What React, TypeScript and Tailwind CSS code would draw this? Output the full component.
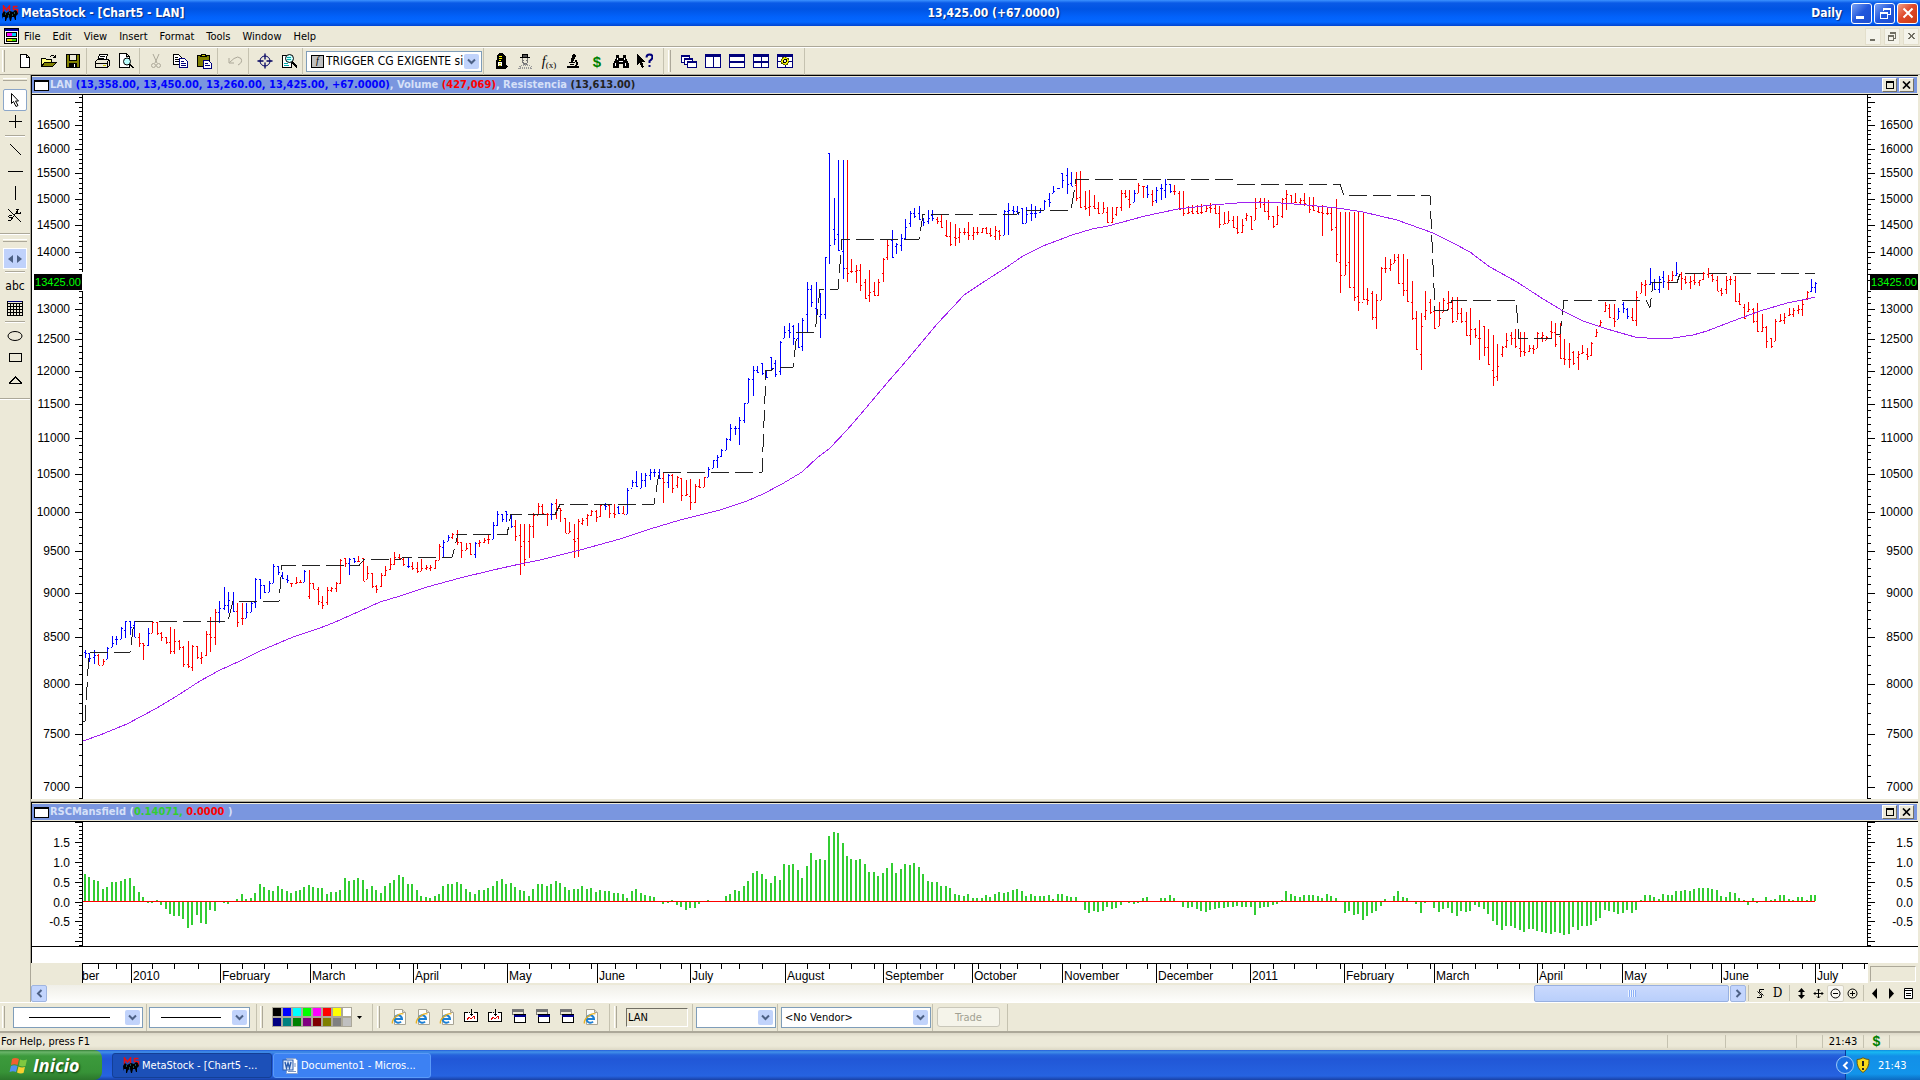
import React from 'react';
import { clsx } from 'clsx';

// One row per session: colour, high, low, open, close (vertical chart units)
const SESSIONS = `
b650,658,652,653 b653,662,653,658 b650,664,657,655 r654,665,655,665 r659,665,665,661 b647,659,659,648 b636,647,647,643 b636,645,639,639
b627,639,639,628 b621,638,630,621 b621,635,621,627 b621,637,625,637 r633,647,637,643 r643,660,643,645 b628,646,645,633 r622,633,633,622
r622,635,622,633 r632,641,633,637 r637,644,637,642 r627,654,642,651 r629,654,651,641 r640,650,641,647 r646,667,647,664 r641,668,664,666
r645,671,667,646 r646,659,646,657 r652,664,658,657 r631,656,655,634 r617,652,634,637 r609,645,637,612 b601,623,612,608 b587,610,608,605
b592,613,605,600 b592,612,601,611 r603,627,611,622 r603,625,618,618 b603,618,618,612 b601,612,612,603 b578,608,602,579 b579,599,579,585
b585,593,585,592 b581,592,592,583 b564,583,583,566 b566,575,566,572 b572,579,575,578 b575,583,579,580 r583,587,583,583 r577,584,583,582
r580,583,582,582 b570,582,582,571 r570,599,596,583 r583,589,583,589 r587,605,589,601 r596,609,602,605 r587,605,602,590 r587,592,590,588
r582,592,588,583 r559,584,583,560 r558,567,558,563 b558,575,563,559 b558,563,558,561 r556,562,561,561 r558,581,558,581 r566,579,579,573
r573,588,573,586 r585,593,586,589 r573,587,586,575 r566,576,575,570 r558,570,569,564 r552,565,564,557 r554,560,557,558 r557,566,559,564
b558,568,566,566 r562,570,566,568 r562,573,568,571 r559,571,571,568 r565,570,568,567 r565,571,568,567 r560,569,568,560 r544,560,560,546
b540,558,547,542 b535,541,541,537 r533,539,537,534 r530,545,534,542 r542,558,542,550 r543,550,550,548 r543,555,543,554 b542,558,554,543
r540,547,543,542 r538,543,542,540 r535,544,539,539 b522,539,539,525 b511,526,525,514 b514,522,514,519 b511,522,511,514 b514,528,515,526
r520,541,526,536 r524,575,535,546 r524,566,541,559 r524,558,541,526 r513,538,526,515 r503,515,515,506 r504,515,506,513 r513,526,514,514
b503,520,514,504 r499,519,503,508 r508,522,508,510 r518,533,518,533 r522,533,533,531 r524,558,539,541 r519,557,538,521 r518,525,523,520
r514,526,518,515 r510,516,515,511 r510,522,511,517 r504,517,516,505 b503,510,505,506 r504,518,505,513 r504,518,513,514 b506,514,507,513
r506,514,513,514 b488,514,514,490 b480,487,488,482 b471,487,482,486 b473,488,488,480 b473,487,480,475 b469,480,475,472 b469,477,472,472
b469,479,472,478 r473,503,478,482 b474,488,482,475 r474,493,475,488 r476,488,485,477 r478,501,478,495 r480,496,495,494 r479,510,496,502
r484,503,502,486 r479,488,486,487 r477,487,487,477 b467,477,477,469 b460,468,468,460 b455,468,460,457 b449,457,456,450 b438,450,450,439
b424,441,439,428 b426,435,428,428 b417,445,428,420 b403,423,420,403 b378,403,403,379 b366,396,379,370 b366,373,370,372 b363,375,363,373
b370,378,374,377 b357,370,357,368 b360,377,363,374 b341,375,371,342 b326,338,338,332 b323,338,330,332 b325,345,326,338 b323,348,338,347
b318,351,346,320 b282,332,314,289 b285,307,289,302 b282,318,308,314 b293,338,316,314 b257,319,314,257 b153,264,153,245 b198,245,229,239
b160,251,234,250 b160,279,251,268 r160,282,268,273 r259,273,271,271 r265,283,271,270 r264,291,270,285 r279,299,282,298 r270,302,295,292
r282,296,291,295 r279,296,295,282 r258,282,273,259 r240,260,257,245 b230,258,240,257 b243,254,246,244 b234,251,245,238 b219,240,238,227
b211,227,223,213 b208,218,213,216 b206,220,213,219 b218,226,219,222 b210,224,221,218 b210,221,215,218 r217,224,219,221 r215,228,221,227
r220,237,235,236 r222,246,236,244 r224,246,237,238 r228,243,237,232 r228,235,232,232 r222,240,232,235 r227,240,235,232 r227,235,232,232
r228,233,232,228 r227,234,228,233 r228,237,233,235 r226,240,236,230 r230,240,231,235 b210,235,235,211 b203,235,211,210 b206,215,210,211
b206,214,211,214 b208,224,208,223 b207,223,223,214 b204,221,213,213 b206,218,213,213 b208,213,212,210 b200,210,210,201 b193,207,199,202
b186,193,193,191 b188,189,188,188 b173,188,173,180 b168,194,175,184 b172,186,183,186 r172,201,185,198 r171,208,197,207 r191,210,206,208
r190,216,207,206 r195,209,206,208 r202,214,208,213 r202,213,213,208 r207,223,212,222 r207,223,222,218 r207,216,214,207 r190,211,207,193
r190,198,193,196 r190,208,199,204 b190,202,202,193 r183,193,193,185 r186,198,186,186 b185,198,187,194 r190,206,194,201 b187,203,200,190
b184,200,188,188 b179,198,190,184 b184,193,184,191 r185,195,191,191 r191,210,193,209 r191,216,208,213 r206,214,213,212 r205,214,211,213
r205,214,211,213 r204,214,212,212 r205,212,211,208 r203,213,207,208 r204,214,208,213 r206,228,213,224 r212,224,224,223 r211,223,223,220
r216,228,220,227 r216,234,228,232 r219,233,232,225 r213,221,218,215 r216,230,216,229 r198,220,220,208 r198,208,201,202 r198,212,204,211
r200,220,211,216 r216,228,216,226 r206,225,224,215 r198,218,216,199 r190,210,198,194 r195,204,195,203 r193,203,202,202 r198,205,202,200
r193,206,200,203 r197,213,205,209 r197,211,206,210 r206,213,211,212 r205,236,212,213 r208,215,213,213 r208,231,213,229 r199,262,227,254
r212,293,262,275 r212,275,275,265 r212,288,262,287 r212,301,287,297 r212,311,296,302 r212,300,302,299 r288,305,299,300 r291,320,293,317
r294,329,317,300 r267,300,300,268 r257,273,268,268 r259,271,268,264 r254,263,263,260 r254,284,257,283 r254,296,283,290 r259,302,290,301
r281,320,302,318 r311,350,318,349 r313,370,354,326 r291,320,316,310 r299,314,302,312 r310,329,311,328 r302,326,326,318 r298,312,312,300
r291,310,303,302 r297,323,308,321 r297,320,321,313 r308,323,313,321 r312,336,321,335 r308,345,335,329 r328,338,329,335 r320,360,338,338
r326,356,326,347 r329,365,347,364 r335,386,370,377 r344,381,376,366 r346,357,354,347 r333,348,346,340 r332,345,335,338 r329,348,338,346
r332,357,348,351 r332,356,351,352 r345,352,351,348 r345,354,348,349 r332,348,348,333 r332,342,337,335 r336,340,340,337 r321,338,331,332
r323,347,332,344 r323,359,336,358 r339,365,358,359 r343,368,359,359 r351,365,352,363 r351,370,357,354 r345,354,353,352 r348,360,354,356
r342,356,355,343 r329,337,336,332 r320,326,325,322 r302,312,311,305 r304,318,308,317 r304,327,318,321 b308,319,319,311 b302,313,304,308
b308,319,309,316 r308,321,317,320 r291,326,320,297 r282,293,293,284 r280,296,285,284 b268,285,284,282 b279,290,282,289 b276,293,289,279
b271,288,277,281 r275,290,282,280 r271,281,280,275 b262,276,275,273 r272,290,274,278 r276,284,279,282 r276,289,282,281 r274,285,280,282
r280,286,282,280 r272,280,279,273 r268,278,274,273 r273,282,275,279 r276,291,280,291 r288,296,290,293 r276,294,289,280 r276,285,279,279
r276,302,280,301 r293,305,301,304 r304,319,307,318 r302,312,311,309 r308,323,309,321 r303,332,321,331 r314,332,331,327 r326,348,327,341
r338,348,338,346 r319,341,341,321 r314,322,321,320 r313,324,320,317 r308,316,315,314 r308,317,314,310 r305,314,310,309 r299,316,309,304
r291,300,298,292 b279,292,291,287 b282,293,287,283
`.trim().split(/\s+/);

const MANSFIELD = [
  27, 24, 21, 20, 12, 14, 19, 19, 20, 22, 23, 15, 9, 4, -2, -2, 1, -4, -8, -13, -15, -15, -18, -27, -24, -14, -22, -23, -9, -10,
  -1, -2, -3, 0, 2, 7, 2, 3, 8, 17, 14, 11, 10, 15, 12, 10, 8, 10, 11, 14, 16, 14, 13, 13, 7, 9, 9, 11, 23, 20,
  21, 23, 21, 12, 15, 11, 8, 15, 18, 21, 26, 24, 17, 17, 11, 5, 4, 3, 5, 7, 15, 17, 17, 19, 17, 12, 9, 7, 11, 11,
  13, 15, 20, 22, 17, 18, 14, 11, 10, 5, 12, 17, 17, 15, 17, 20, 18, 14, 11, 12, 12, 15, 12, 13, 9, 11, 10, 10, 8, 8,
  7, 3, 10, 12, 8, 6, 5, 4, -1, -3, -2, 1, -4, -6, -9, -7, -7, -3, -1, 1, 0, -1, 0, 5, 7, 11, 10, 15, 20, 28,
  30, 27, 22, 18, 25, 21, 37, 36, 37, 31, 23, 35, 48, 41, 42, 41, 65, 69, 68, 58, 45, 42, 41, 42, 37, 29, 29, 25, 28, 33,
  38, 28, 32, 37, 36, 38, 34, 27, 20, 19, 19, 15, 15, 13, 7, 6, 5, 7, 3, 3, 3, 6, 4, 7, 9, 8, 9, 11, 12, 10,
  5, 7, 5, 5, 5, 6, 2, 7, 7, 5, 4, 4, -1, -9, -12, -10, -11, -10, -6, -8, -7, -4, 0, -2, -3, -2, 3, 4, 0, -1,
  3, 3, 6, 3, 0, -6, -7, -6, -8, -10, -11, -9, -8, -7, -7, -6, -6, -5, -6, -6, -6, -14, -7, -6, -6, -4, -3, 1, 10, 7,
  5, 4, 6, 6, 6, 5, 3, 7, 5, 3, -1, -12, -10, -14, -13, -19, -15, -12, -10, -5, 2, 0, 5, 10, 4, 3, 0, -3, -12, -2,
  -1, -7, -11, -8, -7, -12, -15, -10, -11, -10, -4, -6, -8, -13, -20, -24, -29, -25, -25, -27, -29, -31, -28, -28, -30, -31, -32, -33, -31, -32,
  -34, -33, -26, -29, -25, -25, -24, -20, -17, -9, -10, -11, -13, -12, -9, -12, -9, 1, 6, 6, 4, 2, 7, 6, 6, 10, 10, 11, 10, 12,
  13, 13, 13, 12, 11, 5, 4, 9, 8, 3, 1, -4, 3, -2, -1, 4, 1, 2, 6, 6, 2, 1, 4, 4, 1, 6, 6,
];

const AVERAGE = '83,741 100,735 127,724 157,708 180,694 200,681 220,670 240,661 260,651 293,637 320,628 333,623 360,611 380,602 400,596 427,587 460,578 493,570 520,564 540,560 560,555 580,550 620,539 650,529 680,520 720,510 747,501 763,494 782,484 802,472 817,458 830,448 847,430 860,415 887,383 907,360 937,324 953,307 964,295 982,283 1007,267 1023,256 1043,246 1072,235 1092,229 1108,226 1145,216 1178,209 1212,205 1250,202 1268,202 1307,205 1337,208 1363,212 1397,220 1433,233 1453,243 1470,252 1490,267 1517,282 1540,297 1563,311 1583,321 1607,329 1635,337 1647,338 1673,338 1693,335 1707,331 1733,321 1760,311 1787,303 1807,299 1815,297';

const RESISTANCE = 'M83 721.5H85L89 652.5H130L134 621.5H228L233 601.5H279L282 565.5H359L364 559.5H400L403 557.5H452L458 534.5H507L511 514.5H555L560 504.5H654L659 472.5H762L766 370.5H771L775 367.5H793L797 332.5H815L820 289.5H838L842 239.5H919L923 214.5H1016L1023 210.5H1071L1076 179.5H1233L1237 184.5H1340L1344 195.5H1430L1435 310.5H1447L1452 300.5H1516L1519 338.5H1552L1556 334.5H1560L1564 300.5H1646L1650 307.5L1653 282.5H1677L1680 273.5H1815';

const MONTHS: [number, string][] = [
  [131, '2010'], [220, 'February'], [310, 'March'], [413, 'April'], [507, 'May'], [597, 'June'], [690, 'July'], [785, 'August'],
  [883, 'September'], [972, 'October'], [1062, 'November'], [1156, 'December'], [1250, '2011'], [1344, 'February'], [1434, 'March'],
  [1537, 'April'], [1622, 'May'], [1721, 'June'], [1815, 'July'],
];
const WEEKS = [
  98, 116, 152, 174, 198, 242, 264, 287, 331, 355, 376, 399, 417, 440, 461, 484, 529, 551, 569, 591, 615, 636, 660, 681, 700, 721, 739,
  762, 807, 829, 851, 874, 896, 920, 936, 954, 978, 1000, 1017, 1040, 1080, 1102, 1126, 1147, 1170, 1187, 1210, 1233, 1274, 1295, 1317,
  1340, 1362, 1385, 1407, 1430, 1452, 1475, 1497, 1519, 1542, 1564, 1586, 1600, 1645, 1667, 1690, 1712, 1734, 1757, 1779, 1802, 1819, 1842, 1864,
];

const barX = (i: number) => Math.floor(85.3 + i * 4.4836);
const priceY = (p: number) => Math.round(787 - Math.log(p / 7000) * 772);
const rscY = (v: number) => Math.round(901.5 - v * 39.6);

const barsPath = (color: string) =>
  SESSIONS.map((s, i) => {
    if (s[0] !== color) return '';
    const [hi, lo, o, c] = s.slice(1).split(',').map(Number);
    const x = barX(i);
    return `M${x + 0.5} ${hi}V${lo}M${x - 1} ${o + 0.5}h1M${x + 1} ${c + 0.5}h1`;
  }).join('');

const rscPath = MANSFIELD.map((v, i) => (v ? `M${barX(i)} 901V${901 - v}` : '')).join('');

const PRICE_TICKS = Array.from({ length: 103 }, (_, i) => 6900 + i * 100);
const RSC_TICKS = Array.from({ length: 32 }, (_, i) => (20 - i) / 10);

interface AxisProps {
  side: 'left' | 'right';
}

const PriceAxis: React.FC<AxisProps> = ({ side }) => {
  const left = side === 'left';
  const d = PRICE_TICKS.filter((p) => p < 13400 || p > 13500 || (!left && p !== 13400)).map((p) => {
    const len = p % 500 === 0 && p !== 13500 ? 7 : 3;
    return left ? `M${50 - len} ${priceY(p) + 0.5}h${len}` : `M1 ${priceY(p) + 0.5}h${len}`;
  }).join('');
  return (
    <svg className="block w-[51px] h-[704px] shrink-0" viewBox="0 95 51 704" fontFamily="'Liberation Sans', Arial, sans-serif" fontSize="12">
      <path d={left ? 'M50.5 95V272M50.5 291V799' : 'M.5 95V799'} stroke="#000" shapeRendering="crispEdges" />
      <path d={d} stroke="#000" shapeRendering="crispEdges" />
      {PRICE_TICKS.filter((p) => p % 500 === 0 && p !== 13500 && p < 17000).map((p) => (
        <text key={p} x={left ? 38 : 46} y={priceY(p) + 4} textAnchor="end">{p}</text>
      ))}
      <rect x={left ? 2 : 3} y="274" width="48" height="16" fill="#000" />
      <text x={left ? 49 : 50} y="286" textAnchor="end" fill="#0f0" fontSize="11">13425.00</text>
    </svg>
  );
};

const RscAxis: React.FC<AxisProps> = ({ side }) => {
  const left = side === 'left';
  const d = RSC_TICKS.map((v) => {
    const len = Math.round(v * 10) % 5 === 0 ? 7 : 3;
    return left ? `M${50 - len} ${rscY(v) + 0.5}h${len}` : `M1 ${rscY(v) + 0.5}h${len}`;
  }).join('');
  return (
    <svg className="block w-[51px] h-[124px] shrink-0" viewBox="0 822 51 124" fontFamily="'Liberation Sans', Arial, sans-serif" fontSize="12">
      <path d={left ? 'M50.5 822V946' : 'M.5 822V946'} stroke="#000" shapeRendering="crispEdges" />
      <path d={d} stroke="#000" shapeRendering="crispEdges" />
      {[1.5, 1, 0.5, 0, -0.5].map((v) => (
        <text key={v} x={left ? 38 : 46} y={rscY(v) + 5} textAnchor="end">{v.toFixed(1)}</text>
      ))}
    </svg>
  );
};

const Chevron = () => (
  <span className="pointer-events-none absolute right-[2px] top-[2px] bottom-[2px] w-[15px] rounded-[2px] bg-[#c1d3fb] flex items-center justify-center">
    <svg width="9" height="7" viewBox="0 0 9 7" fill="none" stroke="#4d6185" strokeWidth="2"><path d="M1 1.5 4.5 5 8 1.5" /></svg>
  </span>
);

interface ComboProps {
  label: string;
  value: string;
  className: string;
  children?: React.ReactNode;
}

const Combo: React.FC<ComboProps> = ({ label, value, className, children }) => (
  <div className={clsx('relative h-[21px] shrink-0 bg-white border border-[#7f9db9]', className)}>
    <select aria-label={label} className="appearance-none block w-full h-full pl-[3px] pr-[18px] bg-transparent outline-none">
      <option>{value}</option>
    </select>
    {children}
    <Chevron />
  </div>
);

const Sep = () => <span className="w-px h-[27px] mx-px shrink-0 bg-[#c5c2b0]" />;
const Grip = () => <span className="w-[3px] h-[22px] shrink-0 border-r border-[#aca899] border-l border-l-white" />;

interface IconButtonProps {
  label: string;
  className?: string;
  children: React.ReactNode;
}

const IconButton: React.FC<IconButtonProps> = ({ label, className, children }) => (
  <button aria-label={label} className={clsx('w-6 h-6 shrink-0 flex items-center justify-center', className)}>
    <svg width="16" height="16" viewBox="0 0 16 16" fill="none" stroke="#000" shapeRendering="crispEdges">{children}</svg>
  </button>
);

const CaptionButtons = () => (
  <div className="ml-auto flex gap-[2px] pr-[3px]">
    <button aria-label="Maximize pane" className="w-[15px] h-[14px] bg-[#ece9d8] border border-t-white border-l-white border-r-[#716f64] border-b-[#716f64] flex items-center justify-center">
      <span className="w-[8px] h-[8px] border border-t-2 border-black" />
    </button>
    <button aria-label="Close pane" className="w-[15px] h-[14px] bg-[#ece9d8] border border-t-white border-l-white border-r-[#716f64] border-b-[#716f64] flex items-center justify-center">
      <svg width="9" height="8" viewBox="0 0 9 8" stroke="#000" strokeWidth="1.7"><path d="M1 .5 8 7.5M8 .5 1 7.5" /></svg>
    </button>
  </div>
);

const PaneHeader: React.FC<{ children: React.ReactNode }> = ({ children }) => (
  <div className="h-5 border-y border-black bg-[#ece9d8] pt-px pb-[2px] pr-px">
    <div className="h-4 bg-[#7a96df] flex items-center pl-[2px] font-bold text-[11px] leading-4 text-[#d6e0f8] whitespace-pre">
      <span className="w-[15px] h-[11px] mr-px bg-white border border-t-2 border-black shrink-0" />
      <p>{children}</p>
      <CaptionButtons />
    </div>
  </div>
);

const Bull = () => (
  <svg width="17" height="17" viewBox="0 0 17 17" className="shrink-0">
    <path d="M1.5 8V1l3 4 3-4v6M15.5 1.500h-4v3h4v4" fill="none" stroke="#e81010" strokeWidth="1.5" />
    <path d="M0 9l2-3 2 2 4-2 3 1 2-2 2 1 1 3-2 2v4h-1l-1-3-2 0-1 4H8l-1-4-2 1-1 3H3v-4l-2 0-.5 2z" fill="#000" />
    <path d="M3 9h1M7 8h1M10 10h1M12 8h1M6 11h1" stroke="#3aa" />
  </svg>
);

const TitleBar = () => (
  <header className="h-[26px] flex items-center pl-[2px] pr-[2px] text-white font-bold text-[12px] bg-[linear-gradient(to_bottom,#3c92ff_0px,#0a5ae6_3px,#0054e3_9px,#0262fb_17px,#0468ff_22px,#0144d0_26px)] [text-shadow:1px_1px_1px_#0a2a80]">
    <div className="basis-[48.3%] flex items-center gap-[2px]">
      <Bull />
      <h1>MetaStock - [Chart5 - LAN]</h1>
    </div>
    <span>13,425.00 (+67.0000)</span>
    <span className="ml-auto mr-[9px]">Daily</span>
    <div className="flex gap-[2px]">
      <button aria-label="Minimize" className="w-[21px] h-[21px] rounded-[3px] border border-white bg-[linear-gradient(135deg,#7ba2f4,#2257dc_50%,#1e4fd0)] flex items-end justify-start p-[4px]"><span className="w-[8px] h-[3px] bg-white" /></button>
      <button aria-label="Restore" className="w-[21px] h-[21px] rounded-[3px] border border-white bg-[linear-gradient(135deg,#7ba2f4,#2257dc_50%,#1e4fd0)] flex items-center justify-center">
        <svg width="12" height="12" viewBox="0 0 12 12" fill="none" stroke="#fff" shapeRendering="crispEdges"><path d="M4 1.5h7.5M4 2.5h7.5M4.5 1v3M11 1v6.5H8M1 5.5h7.5M1 6.5h7.5M1.5 5v6.5h6.5V5" /></svg>
      </button>
      <button aria-label="Close" className="w-[21px] h-[21px] rounded-[3px] border border-white bg-[linear-gradient(135deg,#f0a088,#e0492a_45%,#c93a12)] flex items-center justify-center">
        <svg width="12" height="12" viewBox="0 0 12 12" stroke="#fff" strokeWidth="2"><path d="M1.5 1.5 10.5 10.5M10.5 1.5 1.5 10.5" /></svg>
      </button>
    </div>
  </header>
);

const MenuBar = () => (
  <nav className="h-[21px] flex items-center pl-1 border-b border-[#aca899]">
    <svg width="15" height="16" viewBox="0 0 15 16" shapeRendering="crispEdges" className="mr-px">
      <rect width="15" height="16" fill="#000" /><rect x="1" y="1" width="13" height="2" fill="#0000a0" /><rect x="1" y="3" width="13" height="12" fill="#fff" />
      <rect x="2" y="4" width="11" height="5" fill="#000" /><rect x="2" y="10" width="11" height="4" fill="#000" />
      <rect x="3" y="5" width="5" height="3" fill="#f0f" /><rect x="8" y="5" width="4" height="3" fill="#0cf" />
      <rect x="3" y="11" width="5" height="2" fill="#dd0" /><rect x="8" y="11" width="4" height="2" fill="#3d0" />
    </svg>
    {['File', 'Edit', 'View', 'Insert', 'Format', 'Tools', 'Window', 'Help'].map((m) => (
      <button key={m} className="px-[6px] first-of-type:pl-1">{m}</button>
    ))}
    <div className="ml-auto flex gap-[3px] pr-px">
      {['M2 8.500h5M2 9.500h5', 'M3 1.500h6M3 2.500h6M8.500 2v5H7M1 4.500h6M1 5.500h6M1.500 5v4.500h5V5', 'M2 2l6 6M8 2 2 8M3 2l6 6M9 2 3 8'].map((d, i) => (
        <button key={d} aria-label={['Minimize chart', 'Restore chart', 'Close chart'][i]} className="w-4 h-[17px] bg-[#f4f3ea] border border-[#e3dfcc] flex items-center justify-center">
          <svg width="11" height="11" viewBox="0 0 11 11" fill="none" stroke="#716f64" shapeRendering="crispEdges"><path d={d} /></svg>
        </button>
      ))}
    </div>
  </nav>
);

const Toolbar = () => (
  <div className="h-[28px] flex items-center pl-[2px] border-t border-white border-b border-b-[#aca899]">
    <Grip />
    <IconButton label="New" className="ml-2"><path fill="#fff" d="M3.5 1.5h6l3 3v10h-9zM9.5 1.5v3h3" /></IconButton>
    <IconButton label="Open"><path fill="#ffff80" d="M.5 13.5v-8h4l1 1h5v3" /><path fill="#808000" d="M.5 13.5l3-4h12l-4 4z" /><path d="M9 3.5h1M10 2.5h3M13 3.5h1M14.5 2v3M12 4.5h2" /></IconButton>
    <IconButton label="Save"><path fill="#808000" d="M1.5 1.5h13v13h-13z" /><path fill="#ece9d8" d="M4.5 1.5h7v6h-7z" /><path fill="#000" d="M4.5 10.5h7v4h-7z" /><path stroke="#fff" d="M9.5 11v3" /></IconButton>
    <Sep />
    <IconButton label="Print" className="ml-[2px]"><path fill="#fff" d="M5.5 1.5h8l-2 6h-8z" /><path fill="#ece9d8" d="M1.5 8.5l2-2h10l2 1v5l-2 2h-12z" /><path d="M1 10.5h13M6 3.5h5M5 5.5h5M13.5 8v6" /><path stroke="#cc0" d="M9 12.5h3" /></IconButton>
    <IconButton label="Print preview"><path fill="#fff" d="M1.5.5h7l3 3v11h-10zM8.5.5v3h3" /><circle cx="9" cy="8.5" r="3.500" fill="#bff" shapeRendering="auto" /><path strokeWidth="2" d="M11.5 11l4 4" /></IconButton>
    <Sep />
    <IconButton label="Cut" className="ml-[3px]"><g stroke="#aca899" shapeRendering="auto"><path d="M5 1l4 9M11 1 7 10" /><circle cx="5.5" cy="12.5" r="2" /><circle cx="10.5" cy="12.5" r="2" /></g></IconButton>
    <IconButton label="Copy"><path fill="#fff" d="M1.5 1.5h5l3 3v7h-8zM3 4.5h3M3 6.5h4M3 8.5h4" /><path fill="#fff" stroke="#00007b" d="M7.5 5.5h5l3 3v6h-8zM9 8.5h3M9 10.5h5M9 12.5h5" /></IconButton>
    <IconButton label="Paste"><path fill="#808000" d="M1.5 2.5h12v11h-12z" /><path fill="#d8d400" d="M4.5 3.5h6l-1-2h-4z" /><path fill="#fff" stroke="#00007b" d="M7.5 7.5h5l3 3v5h-8zM9 10.5h3M9 12.5h5" /></IconButton>
    <Sep />
    <IconButton label="Undo" className="ml-[4px]"><path stroke="#aca899" shapeRendering="auto" d="M2 5v5h5M2.5 9.5 7 5.5q4-3 7 0 2 4-3 6.5" /></IconButton>
    <Sep />
    <IconButton label="Center" className="ml-[3px]"><g stroke="#000060" shapeRendering="auto"><circle cx="8" cy="8" r="5" /><path d="M8 .5v6M8 9.5v6M.5 8h6M9.5 8h6" strokeWidth="1.300" /></g></IconButton>
    <IconButton label="Zoom"><path fill="#fff" d="M1.5 14.5v-12h9v12z" /><path stroke="#0aa" d="M3 10.5h4M3 12.5h5" /><circle cx="8.5" cy="5.5" r="4" fill="#cff" shapeRendering="auto" /><path stroke="#0aa" d="M6 4.5h4M6 6.5h4" /><path strokeWidth="2" d="M11 8.5l5 6" /></IconButton>
    <Sep />
    <Combo label="Indicator" value="TRIGGER CG EXIGENTE si" className="w-[176px] ml-[2px] text-[12px] [&>select]:pl-[19px] [&>select]:pr-0">
      <span className="pointer-events-none absolute left-1 top-[3px] w-[13px] h-[13px] bg-[#c0c0c0] border border-black text-center text-[10px] leading-[10px] italic font-['Liberation_Serif',serif]">f</span>
    </Combo>
    <Sep />
    <IconButton label="Expert advisor" className="ml-1"><path fill="#000" d="M4.5 2.5l2-2h3l3 3v8l2 2-2 2h-9v-4z" /><path stroke="#ff0" d="M6 3.5h3M6 5.5h3M6 7.5h2" /><path fill="#fff" d="M4.5 8.5h5v5h-5z" /><path stroke="#cc0" d="M6 10.5h2M6 12.5h2" /></IconButton>
    <IconButton label="System tester"><path fill="#555" d="M5.5 1.5h5v3h-5zM3 4.5h10" /><path stroke="#777" d="M5.5 5v4l2 2h2l1-2V5M6 7.5h1M9 7.5h1M7 10.5h2" /><path stroke="#999" strokeDasharray="1 1" d="M3 13.5l3-2h4l4 2v2H2zM4 12.5h9M3 14.5h11" /></IconButton>
    <button aria-label="Indicator builder" className="w-6 h-6 shrink-0 italic text-[14px] font-['Liberation_Serif',serif]">f<sub className="text-[9px] not-italic">(x)</sub></button>
    <IconButton label="Explorer"><path fill="#000" stroke="none" d="M8 1h2l1 2-3 6H6V7zM4 9h6v1H4zM2 13h12v2H2zM11 6q3 3 1 7h-2q2-3 0-5zM5 11h4v1H5z" /></IconButton>
    <button aria-label="Downloader" className="w-6 h-6 shrink-0 font-bold text-[15px] text-[#008000] font-['Liberation_Sans',sans-serif]">$</button>
    <IconButton label="Find"><path fill="#000" stroke="none" d="M3 2h3v3h4V2h3v3l3 6v4h-6v-4H6v4H0v-4l3-6z" /><path stroke="#fff" d="M2.5 10v3M12.5 10v3M4.5 5v2M11.5 5v2M6 8.5h4" /></IconButton>
    <IconButton label="Context help"><path fill="#000" stroke="none" d="M0 1v11l2.5-2.500L5 15l2-1-2-5h3z" /><path stroke="#00007b" strokeWidth="2" shapeRendering="auto" d="M9.5 4.5q0-3 3-3t3 2.500q0 2-3 4v2M12.5 12v2" /></IconButton>
    <span className="w-[5px]" />
    <Sep />
    <span className="w-[3px]" />
    <Grip />
    <IconButton label="Cascade" className="ml-[6px]"><g stroke="#00007b" fill="#fff"><path d="M.5 2.5h8v7h-8zM.5 3.5h8" /><path d="M3.5 5.5h8v6h-8zM3.5 6.5h8" /><path d="M6.5 8.5h9v6h-9zM6.5 9.5h9" /></g></IconButton>
    <IconButton label="Tile columns"><path fill="#fff" stroke="#00007b" d="M.5 1.5h15v13h-15zM.5 2.5h15M.5 3.5h15M8.5 1v14" /></IconButton>
    <IconButton label="Tile rows"><path fill="#fff" stroke="#00007b" d="M.5 1.5h15v13h-15zM.5 2.5h15M.5 3.5h15M.5 8.5h15M.5 9.5h15" /></IconButton>
    <IconButton label="Tile all"><path fill="#fff" stroke="#00007b" d="M.5 1.5h15v13h-15zM.5 2.5h15M.5 3.5h15M.5 8.5h15M.5 9.5h15M8.5 1v14" /></IconButton>
    <IconButton label="Layout options"><path fill="#fff" stroke="#00007b" d="M.5 1.5h15v13h-15zM.5 2.5h15M.5 3.5h15M.5 8.5h15M8.5 1v14" /><circle cx="8" cy="8" r="4" fill="#ee0" stroke="#550" strokeDasharray="2 1" /><circle cx="8" cy="8" r="1.500" fill="#ece9d8" /></IconButton>
    <span className="w-[6px]" />
    <Sep />
  </div>
);

const SideGrip = () => <div className="mx-[3px] h-[3px] border-t border-white border-b border-b-[#aca899]" />;
const SideRule = () => <div className="mx-[5px] h-[2px] my-[2px] border-t border-[#aca899] border-b border-b-white" />;

const SideBar = () => (
  <aside className="w-[31px] shrink-0 flex flex-col pt-[3px] border-r border-[#aca899]">
    <SideGrip />
    <button aria-label="Pointer" className="mx-[3px] mt-2 h-[22px] bg-white border border-[#8ba6c9] rounded-[2px] flex items-center justify-center">
      <svg width="12" height="16" viewBox="0 0 12 16" fill="#fff" stroke="#000"><path d="M2.5 1.5v10l2-2 2.5 5 2-1-2.500-4.500h3z" /></svg>
    </button>
    <IconButton label="Crosshair" className="mx-[3px] h-[22px]"><path d="M2 7.500h13M8.5 1v13" /></IconButton>
    <SideRule />
    <IconButton label="Trendline" className="mx-[3px] h-[22px]"><path d="M3 2l11 11" /></IconButton>
    <IconButton label="Horizontal line" className="mx-[3px] h-[22px]"><path d="M1 7.500h15" /></IconButton>
    <IconButton label="Vertical line" className="mx-[3px] h-[22px]"><path d="M8.5 0v14" /></IconButton>
    <IconButton label="Speed line" className="mx-[3px] h-[22px]"><path d="M1 1l13 13M11 2 4 12M10.5 1v5M9 1.5h3M9 5.500h5M13.5 4v2M2 7.500h3M1.5 8v1M2 9.500h3M4.5 10v2M1 12.500h3" /></IconButton>
    <div className="mt-[6px] mb-1 h-[2px] border-t border-[#aca899] border-b border-b-white" />
    <SideGrip />
    <button aria-label="Scroll" className="mx-[3px] mt-[6px] h-[21px] bg-[#c0d2fb] border border-white flex items-center justify-center">
      <svg width="14" height="8" viewBox="0 0 14 8" fill="#4d6185"><path d="M5 0v8L0 4zM9 0v8l5-4z" /></svg>
    </button>
    <SideRule />
    <button className="h-[22px] text-[12px]">abc</button>
    <IconButton label="Grid" className="mx-[3px] h-[22px]"><path stroke="#00007b" d="M1 1.5h14" /><path d="M.5 1v14.500h15V1M0 3.500h16M0 6.500h16M0 9.500h16M0 12.500h16M3.5 3v12M6.5 3v12M9.5 3v12M12.5 3v12" /></IconButton>
    <SideRule />
    <IconButton label="Ellipse" className="mx-[3px] h-[22px]"><ellipse cx="8" cy="8" rx="7" ry="4.500" shapeRendering="auto" /></IconButton>
    <IconButton label="Rectangle" className="mx-[3px] h-[22px]"><path d="M2.5 3.500h12v8h-12z" /></IconButton>
    <IconButton label="Triangle" className="mx-[3px] h-[22px]"><path d="M2 11.500h13M2.5 11l6-6 6 6" /></IconButton>
    <div className="mt-[7px] h-[2px] border-t border-[#aca899] border-b border-b-white" />
  </aside>
);

const pct = (x: number) => `${((x - 82) / 1786) * 100}%`;

const DateAxis = () => (
  <div className="flex h-[21px]">
    <div className="w-[51px] shrink-0" />
    <svg className="block grow h-[20px] bg-white border-t border-black" fontFamily="'Liberation Sans', Arial, sans-serif" fontSize="12">
      {WEEKS.map((x) => <line key={x} x1={pct(x)} x2={pct(x)} y1="0" y2="5" stroke="#000" shapeRendering="crispEdges" />)}
      <text x="0" y="16">ber</text>
      <line x1="0.5" x2="0.5" y1="0" y2="19" stroke="#000" />
      {MONTHS.map(([x, name]) => (
        <g key={x}>
          <line x1={pct(x)} x2={pct(x)} y1="0" y2="19" stroke="#000" shapeRendering="crispEdges" />
          <text x={pct(x + 2)} y="16">{name}</text>
        </g>
      ))}
    </svg>
    <div className="w-[50px] shrink-0 pt-[3px] px-[2px]">
      <div className="h-4 w-[46px] border border-t-[#aca899] border-l-[#aca899] border-r-white border-b-white" />
    </div>
  </div>
);

const MiniButton: React.FC<IconButtonProps> = ({ label, className, children }) => (
  <button aria-label={label} className={clsx('w-[17px] h-[17px] shrink-0 flex items-center justify-center', className)}>
    <svg width="11" height="11" viewBox="0 0 11 11" fill="none" stroke="#000">{children}</svg>
  </button>
);

const ScrollRow = () => (
  <div className="flex h-[18px] items-center">
    <div className="grow h-[17px] flex bg-[linear-gradient(to_bottom,#f0efe8,#fefefc)]">
      <button aria-label="Scroll left" className="w-4 rounded-[2px] bg-[#c3d5fd] border border-[#9fb5e0] flex items-center justify-center">
        <svg width="7" height="9" viewBox="0 0 7 9" fill="none" stroke="#4d6185" strokeWidth="2"><path d="M5.5 1 2 4.5 5.5 8" /></svg>
      </button>
      <span className="grow" />
      <span className="basis-[11.4%] rounded-[2px] bg-[linear-gradient(to_bottom,#cad9fd,#b9cffb)] border border-[#98b0e0] flex items-center justify-center gap-px">
        {[0, 1, 2, 3].map((i) => <i key={i} className="w-px h-[7px] bg-[#eef4fe] shadow-[1px_0_0_#8cb0f8]" />)}
      </span>
      <button aria-label="Scroll right" className="w-4 ml-px rounded-[2px] bg-[#c3d5fd] border border-[#9fb5e0] flex items-center justify-center">
        <svg width="7" height="9" viewBox="0 0 7 9" fill="none" stroke="#4d6185" strokeWidth="2"><path d="M1.5 1 5 4.5 1.5 8" /></svg>
      </button>
    </div>
    <div className="w-[172px] shrink-0 flex items-center pl-[2px]">
      <span className="w-px h-4 bg-[#c5c2b0] mr-[3px]" />
      <MiniButton label="Refresh"><path d="M9 1.500H4.500v3M2.500 3.500l2 2 2-2M2 9.500h4.500v-3M4.500 7.500l2-2 2 2" /></MiniButton>
      <button className="w-[17px] text-[12px] leading-4 font-['DejaVu_Serif',serif]">D</button>
      <span className="w-px h-4 bg-[#c5c2b0] mx-[3px]" />
      <MiniButton label="Expand vertical"><path fill="#000" stroke="none" d="M5.5 0 9 4H6.500v3H9L5.500 11 2 7h2.500V4H2z" /></MiniButton>
      <MiniButton label="Pan"><path d="M5.5 1v9M1 5.5h9M4 2.500l1.500-1.500L7 2.500M4 8.500 5.500 10 7 8.500M2.500 4 1 5.500 2.500 7M8.500 4 10 5.500 8.500 7" /></MiniButton>
      <MiniButton label="Zoom out" className="bg-[#f8f7f2] border border-[#d8d4c4] rounded-[2px]"><circle cx="5.5" cy="5.5" r="4.500" /><path d="M3 5.5h5" /></MiniButton>
      <MiniButton label="Zoom in"><circle cx="5.5" cy="5.5" r="4.500" /><path d="M3 5.5h5M5.5 3v5" /></MiniButton>
      <span className="w-px h-4 bg-[#c5c2b0] mx-[2px]" />
      <MiniButton label="Previous"><path fill="#000" stroke="none" d="M8 0v11L3 5.500z" /></MiniButton>
      <MiniButton label="Next"><path fill="#000" stroke="none" d="M3 0v11l5-5.500z" /></MiniButton>
      <MiniButton label="Properties"><path fill="#fff" d="M1.5.5h8v10h-8zM1.500 2.500h8M3 5.500h5M3 7.500h5" /></MiniButton>
    </div>
  </div>
);

const PALETTE = [
  'bg-black', 'bg-[#0000ff]', 'bg-[#00ffff]', 'bg-[#00ff00]', 'bg-[#ff00ff]', 'bg-[#ff0000]', 'bg-[#ffff00]', 'bg-white',
  'bg-[#000080]', 'bg-[#008080]', 'bg-[#008000]', 'bg-[#800080]', 'bg-[#800000]', 'bg-[#808000]', 'bg-[#808080]', 'bg-[#c0c0c0]',
];

const WebIcon = () => (
  <g shapeRendering="auto">
    <path fill="#fdfdfb" stroke="#a8a494" d="M3.5.5h8l3 3v12h-11z" />
    <path fill="#dcd8cc" stroke="#a8a494" d="M11.5.5v3h3" />
    <path d="M3.500 10h7.500a3.700 3.700 0 1 0-1 2.600" stroke="#1b7fd4" strokeWidth="2" />
    <path d="M1.500 14.500q-1-3 3.500-7T12.500 5" stroke="#e8b020" strokeWidth="1.300" />
  </g>
);
const TemplateIcon = () => (
  <g><path fill="#fff" d="M5 3.500H1.500v9h13v-9H11" /><path d="M8.5 0v7M7 5.500h3M6 3.500h1" /><path stroke="#e00000" d="M4 11l2-3 2 2 3-3 1 3" /></g>
);
const WindowIcon = () => (
  <g><path fill="#ece9d8" stroke="#777" d="M1.5.5h11v5h-11zM1.500 1.500h11M1.500 2.500h11" /><path fill="#fff" d="M3.5 5.500h11v8h-11z" /><path stroke="#000090" strokeWidth="2" d="M3 7h12" /></g>
);

const BottomBar = () => (
  <div className="h-[30px] flex items-center pl-[2px] border-t border-white border-b border-b-[#aca899]">
    <Grip />
    <Combo label="Line style" value="" className="w-[130px] ml-2"><span className="pointer-events-none absolute left-[15px] right-[32px] top-[9px] h-px bg-black" /></Combo>
    <span className="w-[2px]" /><Sep />
    <Combo label="Line weight" value="" className="w-[101px] ml-px"><span className="pointer-events-none absolute left-[11px] right-[28px] top-[9px] h-px bg-black" /></Combo>
    <span className="w-[5px]" /><Sep /><span className="w-[2px]" />
    <Grip />
    <div className="ml-[9px] grid grid-cols-8">
      {PALETTE.map((c) => <button key={c} aria-label={c} className={clsx('w-[10px] h-[10px] border border-[#aca899]', c)} />)}
    </div>
    <svg width="5" height="3" viewBox="0 0 5 3" className="ml-[5px] mr-[9px]"><path d="M0 0h5L2.500 3z" /></svg>
    <Sep /><span className="w-[3px]" /><Grip />
    <IconButton label="Web 1" className="ml-[7px]"><WebIcon /></IconButton>
    <IconButton label="Web 2"><WebIcon /></IconButton>
    <IconButton label="Web 3"><WebIcon /></IconButton>
    <IconButton label="Load template"><TemplateIcon /></IconButton>
    <IconButton label="Save template"><TemplateIcon /></IconButton>
    <IconButton label="Window 1"><WindowIcon /></IconButton>
    <IconButton label="Window 2"><WindowIcon /></IconButton>
    <IconButton label="Window 3"><WindowIcon /></IconButton>
    <IconButton label="Web 4"><WebIcon /></IconButton>
    <span className="w-[5px]" /><Sep /><span className="w-[3px]" /><Grip />
    <input aria-label="Symbol" defaultValue="LAN" className="ml-[9px] w-[62px] h-[19px] pl-px bg-[#ece9d8] border border-t-[#716f64] border-l-[#716f64] border-r-white border-b-white outline-none" />
    <span className="w-[3px]" /><Sep />
    <Combo label="Quantity" value="" className="w-[80px] ml-[2px]" />
    <Sep />
    <Combo label="Vendor" value="<No Vendor>" className="w-[150px] ml-[2px]" />
    <Sep />
    <button className="ml-[3px] w-[63px] h-[20px] rounded-[3px] border border-[#c9c7ba] bg-[#f5f4ea] text-[#a1a192]">Trade</button>
    <span className="w-[6px]" /><Sep />
  </div>
);

const StatusCell: React.FC<{ className: string; children?: React.ReactNode }> = ({ className, children }) => (
  <span className={clsx('h-[13px] shrink-0 border-l border-[#c5c2b0] flex items-center justify-center', className)}>{children}</span>
);

const StatusBar = () => (
  <div className="h-[18px] flex items-center pl-px border-t border-[#aca899] bg-[linear-gradient(to_bottom,#dcd8c8,#ece9d8_4px,#ece9d8_13px,#dcd8c6)]">
    <span className="grow">For Help, press F1</span>
    <StatusCell className="w-[58px]" />
    <StatusCell className="w-[71px]" />
    <StatusCell className="w-[26px]" />
    <StatusCell className="w-[41px]">21:43</StatusCell>
    <StatusCell className="w-[26px]"><b className="text-[14px] text-[#008000] font-['Liberation_Sans',sans-serif]">$</b></StatusCell>
    <StatusCell className="w-[31px]" />
  </div>
);

const TaskBar = () => (
  <footer className="h-[30px] flex text-white bg-[linear-gradient(to_bottom,#245edb_0px,#4190e8_2px,#2562dc_5px,#2157d7_9px,#2663e0_26px,#1941a5_30px)]">
    <button className="w-[102px] h-full flex items-center gap-1 pl-[9px] rounded-r-[8px] italic font-bold text-[18px] [text-shadow:1px_1px_2px_#0a3a0a] bg-[linear-gradient(to_bottom,#327e33_0px,#6ab56a_2px,#3c9a3c_6px,#379337_22px,#2b762b_30px)] font-['Open_Sans',sans-serif]">
      <svg width="20" height="19" viewBox="0 0 20 19">
        <path fill="#f06030" d="M3 3q3-2 7 0L8.500 9q-3-1.500-6.500 0z" /><path fill="#80c840" d="M11 3.500q3 1.500 7 0L16.500 10q-3 1.200-6.500-.5z" />
        <path fill="#5090f0" d="M2 10q3-1.500 6.500 0L7 16q-3-1.500-6.500 0z" /><path fill="#f8d030" d="M9.500 10.500q3 1.500 6.500.5L14.500 17q-3 1.200-6.500-.5z" />
      </svg>
      Inicio
    </button>
    <button className="ml-[10px] mt-[3px] w-[160px] h-[25px] rounded-[3px] bg-[#1c50b8] border border-[#143f96] flex items-center pl-[10px] gap-[2px]">
      <Bull /> MetaStock - [Chart5 -...
    </button>
    <button className="mt-[3px] w-[158px] h-[25px] ml-px rounded-[3px] bg-[#3c81f3] border border-[#5a9af8] flex items-center pl-[8px] gap-[3px]">
      <svg width="16" height="16" viewBox="0 0 16 16"><path fill="#fff" stroke="#8aa4d0" d="M4.5.5h9l2 2v13h-11z" /><rect x="1" y="2" width="10" height="10" fill="#dce8fa" stroke="#2a5cad" /><path d="M3 4l1.500 6L6 5l1.500 5L9 4" fill="none" stroke="#2a5cad" strokeWidth="1.400" /><path d="M12 6h2M12 8h2M6 13.500h8" stroke="#7a94c0" /></svg>
      Documento1 - Micros...
    </button>
    <div className="ml-auto w-[75px] flex items-center border-l border-[#0a3a9a] bg-[linear-gradient(to_bottom,#0d8ae0_0px,#18b9f2_2px,#1290e8_6px,#1294ea_24px,#0c6ac0_30px)]">
      <button aria-label="Show hidden icons" className="-ml-[10px] w-[18px] h-[18px] rounded-full bg-[#1a6fe0] border border-[#9ccaf8] flex items-center justify-center">
        <svg width="7" height="9" viewBox="0 0 7 9" fill="none" stroke="#fff" strokeWidth="2"><path d="M5.5 1 2 4.5 5.5 8" /></svg>
      </button>
      <svg width="14" height="16" viewBox="0 0 14 16" className="ml-[2px] mr-2"><path fill="#f8d818" stroke="#6a5a10" d="M7 .8q3 1.700 6 1.700.5 9-6 13Q.5 11.500 1 2.500q3 0 6-1.700z" /><path d="M7 4v5M7 11v2" stroke="#222" strokeWidth="2" /></svg>
      <span>21:43</span>
    </div>
  </footer>
);

const App: React.FC = () => (
  <div className="min-h-screen flex flex-col bg-[#ece9d8] text-black text-[11px] leading-[13px] font-['DejaVu_Sans_Condensed','DejaVu_Sans',sans-serif]">
    <TitleBar />
    <MenuBar />
    <Toolbar />
    <div className="flex">
      <SideBar />
      <main className="grow min-w-0 pr-[2px]">
        <section className="border-l border-black bg-white">
          <PaneHeader>
            LAN <span className="text-[#0000ff]">(13,358.00, 13,450.00, 13,260.00, 13,425.00, +67.0000)</span>, Volume <span className="text-[#ff0000]">(427,069)</span>, Resistencia <span className="text-[#222]">(13,613.00)</span>
          </PaneHeader>
          <div className="flex">
            <PriceAxis side="left" />
            <svg className="block grow min-w-0 h-[704px]" viewBox="83 95 1784 704" preserveAspectRatio="none" fill="none">
              <path d={barsPath('b')} stroke="#0000ff" shapeRendering="crispEdges" />
              <path d={barsPath('r')} stroke="#ff0000" shapeRendering="crispEdges" />
              <path d={RESISTANCE} stroke="#222" strokeDasharray="18 6" shapeRendering="crispEdges" />
              <polyline points={AVERAGE} stroke="#a020f0" shapeRendering="crispEdges" />
            </svg>
            <PriceAxis side="right" />
          </div>
        </section>
        <div className="h-[3px] bg-[#ece9d8] border-b border-[#aca899]" />
        <section className="border-l border-black bg-white">
          <PaneHeader>
            RSCMansfield (<span className="text-[#32cd32]">0.14071, </span><span className="text-[#ff0000]">0.0000 </span>)
          </PaneHeader>
          <div className="flex">
            <RscAxis side="left" />
            <svg className="block grow min-w-0 h-[124px]" viewBox="83 822 1784 124" preserveAspectRatio="none" fill="none">
              <path d={rscPath} stroke="#32cd32" strokeWidth="2" shapeRendering="crispEdges" />
              <path d="M83 901.5H1815" stroke="#ff0000" shapeRendering="crispEdges" />
            </svg>
            <RscAxis side="right" />
          </div>
          <div className="h-[17px] border-t border-black" />
        </section>
        <DateAxis />
        <ScrollRow />
      </main>
    </div>
    <BottomBar />
    <StatusBar />
    <TaskBar />
  </div>
);

export default App;
